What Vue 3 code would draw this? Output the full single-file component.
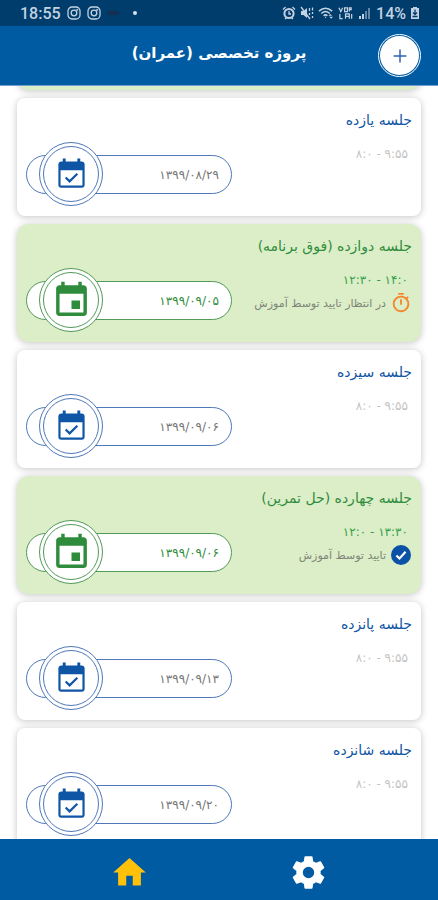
<script setup>
import { ref, onMounted } from 'vue';

const list = ref(null);

const sessions = ref([
  { id: 10, title: '', time: '', date: '', extra: true },
  { id: 11, title: 'جلسه یازده', time: '۸:۰ - ۹:۵۵', date: '۱۳۹۹/۰۸/۲۹' },
  { id: 12, title: 'جلسه دوازده (فوق برنامه)', time: '۱۲:۳۰ - ۱۴:۰', date: '۱۳۹۹/۰۹/۰۵', extra: true, status: 'waiting' },
  { id: 13, title: 'جلسه سیزده', time: '۸:۰ - ۹:۵۵', date: '۱۳۹۹/۰۹/۰۶' },
  { id: 14, title: 'جلسه چهارده (حل تمرین)', time: '۱۲:۰ - ۱۳:۳۰', date: '۱۳۹۹/۰۹/۰۶', extra: true, status: 'approved' },
  { id: 15, title: 'جلسه پانزده', time: '۸:۰ - ۹:۵۵', date: '۱۳۹۹/۰۹/۱۳' },
  { id: 16, title: 'جلسه شانزده', time: '۸:۰ - ۹:۵۵', date: '۱۳۹۹/۰۹/۲۰' },
]);

const statusText = {
  waiting: 'در انتظار تایید توسط آموزش',
  approved: 'تایید توسط آموزش',
};

onMounted(() => {
  list.value.scrollTop = 122;
});
</script>

<template>
  <div class="app" dir="rtl" lang="fa">
    <div class="status-bar" dir="ltr">
      <div class="status-group">
        <span class="clock">18:55</span>
        <svg v-for="n in 2" :key="n" class="insta" viewBox="0 0 14 14">
          <rect x="1" y="1" width="12" height="12" rx="4" />
          <circle cx="7" cy="7" r="2.8" />
          <circle cx="10.3" cy="3.7" r="0.4" />
        </svg>
        <span class="dash"></span>
        <span class="dot"></span>
      </div>
      <div class="status-group icons">
        <svg viewBox="0 0 14 14">
          <circle cx="7" cy="7.5" r="4.6" stroke-width="2" />
          <path d="M7 5v3h2M1 3.5L3.5 1M13 3.5L10.5 1M3 13l1.5-1.5M11 13l-1.5-1.5" />
        </svg>
        <svg viewBox="0 0 14 14">
          <path class="solid" d="M1 5h2.5L7 2v10L3.5 9H1z" />
          <path d="M1 1l9 12M9.5 2v3M9.5 7v2M12.500 1.500v3M12.500 6v2M12.500 10v2" />
        </svg>
        <svg class="wide" viewBox="0 0 17 14">
          <path d="M1 5q7-6 14 0M3.5 7.5q4.500-4 9 0M6 10q2-2 4 0" stroke-width="1.6" />
          <path class="solid" d="M7 11h2l-1 1.5zM11 10l2-2 2 2zM12 11h4l-2 2z" />
        </svg>
        <svg class="wide" viewBox="0 0 17 14">
          <path d="M1 1.5l2 4 2-4M7 1.500h3v4H7zM12 5.500v-4h2v2h-2M2 8v5h3M8 13V8h4v5M8 10.500h4M14.500 8v5" />
        </svg>
        <svg viewBox="0 0 14 14">
          <path class="solid" d="M1 10h2v3H1zM4 8h2v5H4z" />
          <path class="solid faded" d="M7 5h2v8H7zM10 2h2v11h-2z" />
        </svg>
        <span class="battery">14%</span>
        <svg class="narrow" viewBox="0 0 10 14">
          <path class="solid" d="M3 1h4v1h2v11H1V2h2z" />
          <path class="bolt" d="M5 3.5v4M3 6.5l2 2 2-2M2.5 10.5h5" />
        </svg>
      </div>
    </div>

    <header class="header">
      <button class="add" aria-label="افزودن جلسه">
        <span class="add-inner">
          <svg viewBox="0 0 24 24"><path d="M19 12.800h-6.200V19h-1.600v-6.200H5v-1.600h6.200V5h1.600v6.200H19z" /></svg>
        </span>
      </button>
      <h1>پروژه تخصصی (عمران)</h1>
    </header>

    <main ref="list" class="list">
      <article v-for="session in sessions" :key="session.id" class="card" :class="{ extra: session.extra }">
        <div class="info">
          <h2>{{ session.title }}</h2>
          <div class="time" dir="ltr">{{ session.time }}</div>
          <div v-if="session.status" class="status">
            <svg v-if="session.status === 'waiting'" class="timer" viewBox="0 0 24 24">
              <path d="M12,20A7,7 0 0,1 5,13A7,7 0 0,1 12,6A7,7 0 0,1 19,13A7,7 0 0,1 12,20M19.03,7.39L20.45,5.97C20,5.46 19.55,5 19.04,4.56L17.62,6C16.07,4.74 14.12,4 12,4A9,9 0 0,0 3,13A9,9 0 0,0 12,22C17,22 21,17.97 21,13C21,10.88 20.26,8.93 19.03,7.39M11,14H13V8H11M15,1H9V3H15V1Z" />
            </svg>
            <svg v-else class="approved" viewBox="0 0 24 24">
              <circle cx="12" cy="12" r="12" />
              <path d="M6.5 12.5l3.700 3.700 7.300-8" />
            </svg>
            <span>{{ statusText[session.status] }}</span>
          </div>
        </div>
        <div class="pill">
          <span class="date" dir="ltr">{{ session.date }}</span>
          <div class="ring">
            <div class="ring-inner">
              <svg v-if="session.extra" class="calendar large" viewBox="0 0 24 24">
                <path d="M19,19H5V8H19M16,1V3H8V1H6V3H5C3.89,3 3,3.89 3,5V19A2,2 0 0,0 5,21H19A2,2 0 0,0 21,19V5C21,3.89 20.1,3 19,3H18V1M17,12H12V17H17V12Z" />
              </svg>
              <svg v-else class="calendar" viewBox="0 0 24 24">
                <path d="M19.500,19.500H4.500V9H19.500M18,3V1H16V3H8V1H6V3H5C3.89,3 3,3.9 3,5V19A2,2 0 0,0 5,21H19A2,2 0 0,0 21,19V5C21,3.89 20.1,3 19,3Z" />
                <path class="tick" d="M8 14l2.700 2.700 5.300-5.200" />
              </svg>
            </div>
          </div>
        </div>
      </article>
    </main>

    <nav class="bottom-nav" dir="ltr">
      <a href="#home" class="active" aria-label="خانه">
        <svg viewBox="0 0 24 24"><path d="M10 20v-6h4v6h5v-8h3L12 3 2 12h3v8z" /></svg>
      </a>
      <a href="#settings" aria-label="تنظیمات">
        <svg viewBox="0 0 24 24">
          <path d="M12,15.5A3.5,3.5 0 0,1 8.5,12A3.5,3.5 0 0,1 12,8.5A3.5,3.5 0 0,1 15.5,12A3.5,3.5 0 0,1 12,15.5M19.43,12.97C19.47,12.65 19.5,12.33 19.5,12C19.5,11.67 19.47,11.34 19.43,11L21.54,9.37C21.73,9.22 21.78,8.95 21.66,8.73L19.66,5.27C19.54,5.05 19.27,4.96 19.05,5.05L16.56,6.05C16.04,5.66 15.5,5.32 14.87,5.07L14.5,2.42C14.46,2.18 14.25,2 14,2H10C9.75,2 9.54,2.18 9.5,2.42L9.13,5.07C8.5,5.32 7.96,5.66 7.44,6.05L4.95,5.05C4.73,4.96 4.46,5.05 4.34,5.27L2.34,8.73C2.21,8.95 2.27,9.22 2.46,9.37L4.57,11C4.53,11.34 4.5,11.67 4.5,12C4.5,12.33 4.53,12.65 4.57,12.97L2.46,14.63C2.27,14.78 2.21,15.05 2.34,15.27L4.34,18.73C4.46,18.95 4.73,19.03 4.95,18.95L7.44,17.94C7.96,18.34 8.5,18.68 9.13,18.93L9.5,21.58C9.54,21.82 9.75,22 10,22H14C14.25,22 14.46,21.82 14.5,21.58L14.87,18.93C15.5,18.67 16.04,18.34 16.56,17.94L19.05,18.95C19.27,19.03 19.54,18.95 19.66,18.73L21.66,15.27C21.78,15.05 21.73,14.78 21.54,14.63L19.43,12.97Z" />
        </svg>
      </a>
    </nav>
  </div>
</template>

<style>
  body {
    margin: 0;
    background: #fff;
  }
</style>

<style scoped>
  .app {
    display: flex;
    flex-direction: column;
    height: 100vh;
    font-family: "DejaVu Sans", sans-serif;
    background: #fff;
  }

  .status-bar {
    display: flex;
    justify-content: space-between;
    align-items: center;
    height: 26px;
    padding: 0 18px 0 20px;
    background: #003c6c;
    color: #c3d2e0;
    font-family: Roboto, sans-serif;
    font-size: 16px;
    font-weight: 500;
  }
  .status-group {
    display: flex;
    align-items: center;
    gap: 6px;
  }
  .status-group.icons {
    gap: 4px;
  }
  .status-group svg {
    width: 14px;
    height: 14px;
    fill: none;
    stroke: currentColor;
    stroke-width: 1.3;
  }
  .status-group .wide {
    width: 16px;
  }
  .status-group .narrow {
    width: 10px;
  }
  .status-group .solid {
    fill: currentColor;
    stroke: none;
  }
  .status-group .faded {
    opacity: 0.5;
  }
  .status-group .bolt {
    stroke: #003c6c;
  }
  .dash {
    width: 12px;
    height: 4px;
    border-radius: 2px;
    background: #142f50;
  }
  .dot {
    width: 4px;
    height: 4px;
    margin-left: 8px;
    border-radius: 50%;
    background: #d7e2ec;
  }

  .header {
    display: grid;
    grid-template-columns: 1fr auto 1fr;
    align-items: center;
    height: 59px;
    padding: 0 17px;
    border-bottom: 1px solid #6f9fd0;
    background: #005ba3;
  }
  .header h1 {
    margin: 0;
    padding-bottom: 6px;
    color: #fff;
    font-size: 15px;
    line-height: 24px;
  }
  .add {
    width: 43px;
    height: 43px;
    padding: 1px;
    border: 1px solid #fff;
    border-radius: 50%;
    background: #005ba3;
  }
  .add-inner {
    display: flex;
    align-items: center;
    justify-content: center;
    height: 100%;
    border-radius: 50%;
    background: #fff;
  }
  .add svg {
    width: 22px;
    height: 22px;
    fill: #2f62ab;
  }

  .list {
    display: flex;
    flex: 1;
    flex-direction: column;
    gap: 8px;
    min-height: 0;
    padding: 8px 17px;
    overflow-y: auto;
    scrollbar-width: none;
  }
  .card {
    --accent: #0f55a5;
    --line: #4f78b8;
    display: flex;
    flex-shrink: 0;
    box-sizing: border-box;
    justify-content: space-between;
    align-items: flex-start;
    height: 118px;
    padding: 0 9px;
    border-radius: 8px;
    background: #fff;
    box-shadow: 0 1px 7px rgba(0, 0, 0, 0.24);
  }
  .card.extra {
    --accent: #2f8c3c;
    --line: #529a58;
    border-radius: 12px;
    background: #dceec8;
  }
  .info {
    flex: 1;
    padding-top: 11px;
    white-space: nowrap;
  }
  .info h2 {
    margin: 0;
    color: var(--accent);
    font-size: 14px;
    font-weight: 400;
    line-height: 22px;
  }
  .time {
    padding: 13px 4px 0;
    color: #c4c4c4;
    font-size: 12px;
    line-height: 20px;
    text-align: right;
  }
  .extra .time {
    color: #35a04b;
  }
  .status {
    display: flex;
    align-items: center;
    gap: 4px;
    height: 26px;
    color: #7c8577;
    font-size: 11px;
  }
  .status svg {
    width: 22px;
    height: 22px;
  }
  .timer {
    fill: #f5862b;
  }
  .approved {
    fill: #0b52a6;
    padding: 1px;
    box-sizing: border-box;
  }
  .approved path {
    fill: none;
    stroke: #fff;
    stroke-width: 2.6;
  }

  .pill {
    position: relative;
    flex: 0 0 206px;
    box-sizing: border-box;
    height: 39px;
    margin-top: 57px;
    padding: 0 12px;
    border: 1px solid var(--line);
    border-radius: 20px;
    background: #fff;
    color: #757575;
    font-size: 12px;
    line-height: 38px;
  }
  .extra .pill {
    color: var(--accent);
  }
  .ring {
    position: absolute;
    top: -14px;
    left: 12px;
    box-sizing: border-box;
    width: 64px;
    height: 64px;
    padding: 3px;
    border: 1px solid var(--line);
    border-radius: 50%;
    background: #fff;
  }
  .ring-inner {
    display: flex;
    box-sizing: border-box;
    align-items: center;
    justify-content: center;
    height: 100%;
    border: 1px solid var(--line);
    border-radius: 50%;
  }
  .calendar {
    width: 35px;
    height: 35px;
    fill: var(--accent);
  }
  .calendar.large {
    width: 41px;
    height: 41px;
  }
  .tick {
    fill: none;
    stroke: var(--accent);
    stroke-width: 1.5;
  }

  .bottom-nav {
    display: grid;
    grid-template-columns: 1fr 1fr;
    align-items: center;
    height: 61px;
    padding: 6px 40px 0;
    box-sizing: border-box;
    background: #005ba3;
  }
  .bottom-nav a {
    display: flex;
    justify-content: center;
    color: #fff;
  }
  .bottom-nav a.active {
    color: #ffc10a;
  }
  .bottom-nav svg {
    width: 39px;
    height: 39px;
    fill: currentColor;
  }
</style>
